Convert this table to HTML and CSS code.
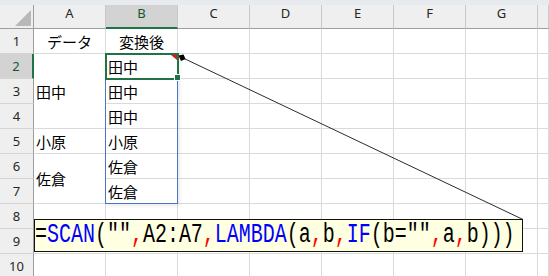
FILE: index.html
```html
<!DOCTYPE html>
<html lang="ja">
<head>
    <meta charset="UTF-8">
    <meta name="viewport" content="width=device-width, initial-scale=1.0">
    <title>SCAN - 空白セルを埋める</title>
    <link rel="stylesheet" href="styles.css">
</head>
<body>
    <div class="page">
        <div class="topbar"></div>

        <!-- worksheet grid: row header + columns A..H -->
        <div class="grid">
            <div class="corner"><span class="corner-tri"></span></div>
            <div class="colhead">A</div>
            <div class="colhead selected">B</div>
            <div class="colhead">C</div>
            <div class="colhead">D</div>
            <div class="colhead">E</div>
            <div class="colhead">F</div>
            <div class="colhead">G</div>
            <div class="colhead"></div>

            <!-- row 1 -->
            <div class="rowhead">1</div>
            <div class="cell center">データ</div>
            <div class="cell center">変換後</div>
            <div class="cell"></div><div class="cell"></div><div class="cell"></div><div class="cell"></div><div class="cell"></div><div class="cell"></div>

            <!-- row 2 (A2:A4 merged) -->
            <div class="rowhead selected">2</div>
            <div class="cell span3">田中</div>
            <div class="cell">田中</div>
            <div class="cell"></div><div class="cell"></div><div class="cell"></div><div class="cell"></div><div class="cell"></div><div class="cell"></div>

            <!-- row 3 -->
            <div class="rowhead">3</div>
            <div class="cell">田中</div>
            <div class="cell"></div><div class="cell"></div><div class="cell"></div><div class="cell"></div><div class="cell"></div><div class="cell"></div>

            <!-- row 4 -->
            <div class="rowhead">4</div>
            <div class="cell">田中</div>
            <div class="cell"></div><div class="cell"></div><div class="cell"></div><div class="cell"></div><div class="cell"></div><div class="cell"></div>

            <!-- row 5 -->
            <div class="rowhead">5</div>
            <div class="cell">小原</div>
            <div class="cell">小原</div>
            <div class="cell"></div><div class="cell"></div><div class="cell"></div><div class="cell"></div><div class="cell"></div><div class="cell"></div>

            <!-- row 6 (A6:A7 merged) -->
            <div class="rowhead">6</div>
            <div class="cell span2">佐倉</div>
            <div class="cell">佐倉</div>
            <div class="cell"></div><div class="cell"></div><div class="cell"></div><div class="cell"></div><div class="cell"></div><div class="cell"></div>

            <!-- row 7 -->
            <div class="rowhead">7</div>
            <div class="cell">佐倉</div>
            <div class="cell"></div><div class="cell"></div><div class="cell"></div><div class="cell"></div><div class="cell"></div><div class="cell"></div>

            <!-- rows 8-10 -->
            <div class="rowhead">8</div>
            <div class="cell"></div><div class="cell"></div><div class="cell"></div><div class="cell"></div><div class="cell"></div><div class="cell"></div><div class="cell"></div><div class="cell"></div>
            <div class="rowhead">9</div>
            <div class="cell"></div><div class="cell"></div><div class="cell"></div><div class="cell"></div><div class="cell"></div><div class="cell"></div><div class="cell"></div><div class="cell"></div>
            <div class="rowhead">10</div>
            <div class="cell"></div><div class="cell"></div><div class="cell"></div><div class="cell"></div><div class="cell"></div><div class="cell"></div><div class="cell"></div><div class="cell"></div>
        </div>

        <!-- spill range, active cell, note marker -->
        <div class="spill"></div>
        <div class="active"></div>
        <div class="note-mark"></div>
        <div class="fill-handle"></div>

        <!-- callout leader line -->
        <svg class="leader" width="549" height="276" viewBox="0 0 549 276">
            <line x1="523" y1="219.5" x2="183" y2="58" stroke="#2b2b2b" stroke-width="1"/>
            <polygon points="178.5,55.5 183.5,54.5 185.5,59 181,61" fill="#000"/>
        </svg>

        <div class="callout">
            <span class="formula">=<b class="fn">SCAN</b>(""<i>,</i>A2:A7<i>,</i><b class="fn">LAMBDA</b>(a<i>,</i>b<i>,</i><b class="fn">IF</b>(b=""<i>,</i>a<i>,</i>b)))</span>
        </div>
    </div>
</body>
</html>
```

FILE: styles.css
```css
* {
    margin: 0;
    padding: 0;
    box-sizing: border-box;
}

body {
    width: 549px;
    height: 276px;
    overflow: hidden;
    background: #ffffff;
    font-family: "Noto Sans CJK JP", sans-serif;
    color: #000;
}

.page {
    position: relative;
    width: 549px;
    height: 276px;
    overflow: hidden;
}

.topbar {
    height: 5px;
    background-color: #e7eaee;
}

/* Sheet grid */
.grid {
    display: grid;
    grid-template-columns: 34px repeat(7, 72px) 1fr;
    grid-template-rows: 24px repeat(10, 25px);
}

.corner {
    background-color: #efefef;
    border-right: 1px solid #9e9e9e;
    border-bottom: 1px solid #9e9e9e;
    display: flex;
    justify-content: flex-end;
    align-items: flex-end;
    padding: 0 2px 2px 0;
}

.corner-tri {
    width: 16px;
    height: 16px;
    background-color: #b9b9b9;
    clip-path: polygon(100% 0, 100% 100%, 0 100%);
}

.colhead {
    background-color: #efefef;
    border-right: 1px solid #c8c8c8;
    border-bottom: 1px solid #9e9e9e;
    font-family: "Noto Sans", sans-serif;
    font-size: 13px;
    line-height: 17px;
    color: #262626;
    text-align: center;
}

.colhead.selected {
    background-color: #d3d3d3;
    border-bottom: 2px solid #217346;
    color: #0f5a30;
}

.rowhead {
    background-color: #efefef;
    border-right: 1px solid #9e9e9e;
    border-bottom: 1px solid #d4d4d4;
    font-family: "Noto Sans", sans-serif;
    font-size: 13px;
    color: #262626;
    display: flex;
    align-items: center;
    justify-content: center;
}

.rowhead.selected {
    background-color: #d3d3d3;
    border-right: 2px solid #217346;
    color: #0f5a30;
}

.cell {
    border-right: 1px solid #dadada;
    border-bottom: 1px solid #dadada;
    font-size: 15px;
    display: flex;
    align-items: center;
    padding-left: 2px;
    white-space: nowrap;
}

.cell.center {
    justify-content: center;
    padding-left: 0;
}

.cell.span3 {
    grid-row: span 3;
}

.cell.span2 {
    grid-row: span 2;
}

/* Overlays on top of the grid */
.spill {
    position: absolute;
    left: 105px;
    top: 53px;
    width: 73px;
    height: 151px;
    border: 1px solid #4a74c4;
    box-shadow: 2px 2px 3px rgba(0, 0, 0, 0.08);
}

.active {
    position: absolute;
    left: 105px;
    top: 53px;
    width: 74px;
    height: 27px;
    border: 2px solid #217346;
}

.fill-handle {
    position: absolute;
    left: 174px;
    top: 74px;
    width: 7px;
    height: 7px;
    background-color: #217346;
    border: 1px solid #ffffff;
}

.note-mark {
    position: absolute;
    left: 171px;
    top: 55px;
    width: 6px;
    height: 5px;
    background-color: #e8121a;
    clip-path: polygon(0 0, 100% 0, 100% 100%);
}

.leader {
    position: absolute;
    left: 0;
    top: 0;
    pointer-events: none;
}

.callout {
    position: absolute;
    left: 34px;
    top: 219px;
    width: 489px;
    height: 33px;
    background-color: #ffffe1;
    border: 1px solid #111;
    display: flex;
    align-items: center;
    overflow: hidden;
}

/* narrow monospace look of the formula */
.formula {
    display: inline-block;
    font-family: "Liberation Mono", "DejaVu Sans Mono", monospace;
    font-size: 27px;
    line-height: 31px;
    white-space: nowrap;
    color: #000;
    transform: scaleX(0.74);
    transform-origin: left center;
}

.formula .fn {
    color: #0000ff;
    font-weight: normal;
}

.formula i {
    color: #ff0000;
    font-style: normal;
}
```
